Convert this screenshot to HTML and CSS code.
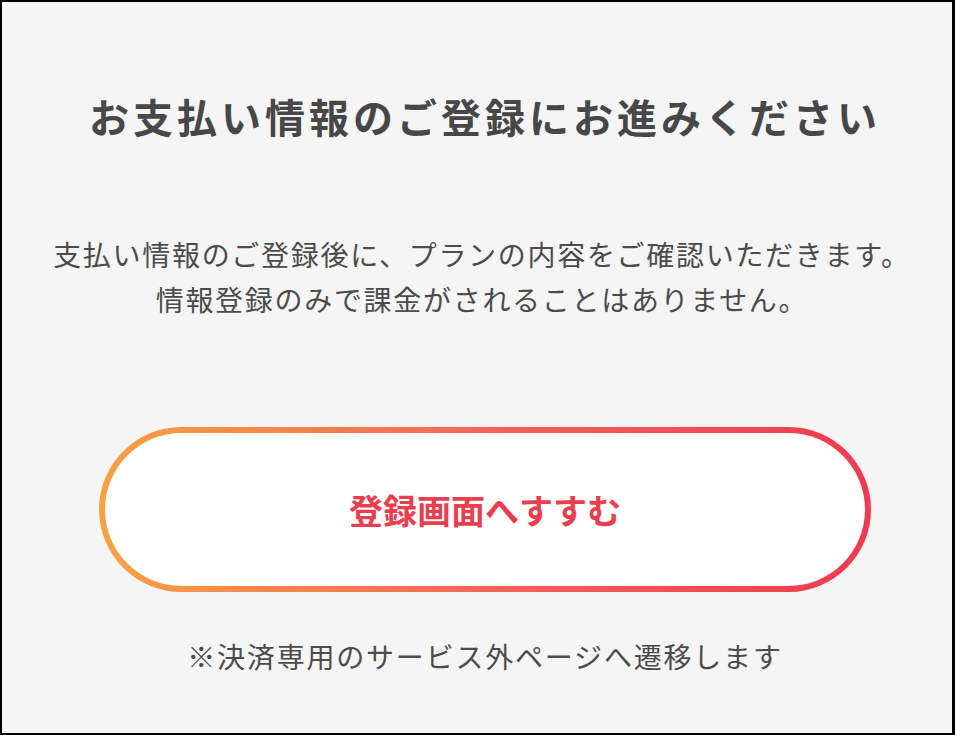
FILE: index.html
```html
<!DOCTYPE html>
<html lang="ja">
<head>
    <meta charset="UTF-8">
    <title>お支払い情報のご登録</title>
    <link rel="stylesheet" href="styles.css">
</head>
<body>
    <div class="frame">
        <div class="container">
            <h2 class="title">お支払い情報のご登録にお進みください</h2>
            <p class="lead">支払い情報のご登録後に、プランの内容をご確認いただきます。<br>情報登録のみで課金がされることはありません。</p>
            <a class="next-button" href="#">登録画面へすすむ</a>
            <p class="note">※決済専用のサービス外ページへ遷移します</p>
        </div>
    </div>
</body>
</html>
```

FILE: styles.css
```css
html, body {
    margin: 0;
    padding: 0;
}
body {
    font-family: "Noto Sans CJK JP", "Noto Sans", sans-serif;
    background: #000;
}
.frame {
    box-sizing: border-box;
    height: 735px;
    border: 2px solid #000;
    border-right-width: 3px;
    background: #f5f5f5;
}
.container {
    padding: 84px 24px 0 40px;
    text-align: center;
}
.title {
    margin: 0;
    font-size: 40px;
    line-height: 60px;
    font-weight: 700;
    letter-spacing: 4px;
    color: #474747;
}
.lead {
    margin: 86px 6px 0 0;
    font-size: 28px;
    line-height: 45px;
    letter-spacing: 1.7px;
    color: #4b4b4b;
    white-space: nowrap;
}
.next-button {
    display: flex;
    align-items: center;
    justify-content: center;
    box-sizing: border-box;
    width: 772px;
    height: 165px;
    margin: 105px auto 0;
    border: 6px solid transparent;
    border-radius: 83px;
    background: linear-gradient(#fff, #fff) padding-box,
                linear-gradient(90deg, #f9a144, #f35f59 55%, #ef3a50) border-box;
    color: #ea3e4f;
    font-size: 34px;
    font-weight: 700;
    text-decoration: none;
}
.note {
    margin: 42px 0 0;
    font-size: 28px;
    line-height: 45px;
    letter-spacing: 1.8px;
    color: #4b4b4b;
}
```
